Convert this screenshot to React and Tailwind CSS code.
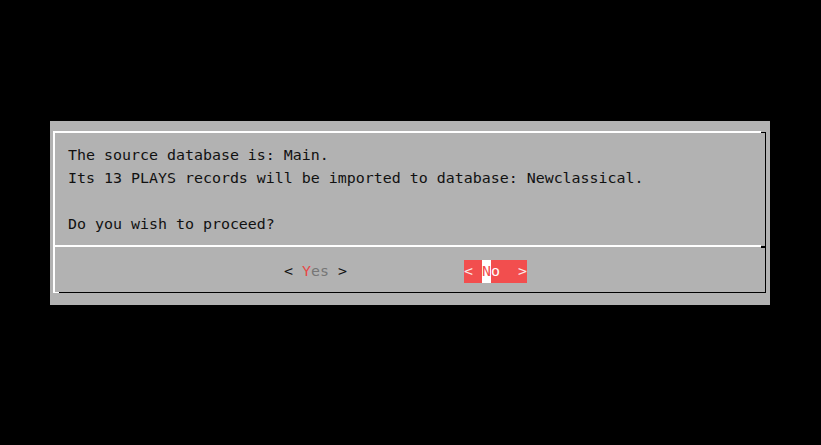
export default function App() {
  const mono = { fontFamily: '"DejaVu Sans Mono", "Liberation Mono", monospace' };

  return (
    <div className="w-[821px] h-[445px] bg-black overflow-hidden pt-[121px] pl-[50px]">
      <div className="w-[720px] h-[184px] bg-[#b2b2b2] pt-[10px] pl-[3px]" style={mono}>
        <div className="relative w-[713px] h-[162px] border-l-2 border-t-2 border-r border-b border-l-white border-t-white border-r-black border-b-black">
          {/* corner pieces drawn by the terminal in other colours */}
          <div className="absolute top-[-2px] right-[-1px] w-[5px] h-[2px] bg-[#b2b2b2] border-b border-black" />
          <div className="absolute bottom-[-1px] left-[-2px] w-[6px] h-[1px] bg-white" />

          <div className="pt-[11px] pl-[13px] text-[14.95px] leading-[23px] text-[#111] whitespace-pre">
            <div>The source database is: Main.</div>
            <div>Its 13 PLAYS records will be imported to database: Newclassical.</div>
            <div> </div>
            <div>Do you wish to proceed?</div>
          </div>

          <div className="flex items-start mt-[9px] -ml-[2px]">
            <div className="w-[708px] h-[2px] bg-white" />
            <div className="w-[4px] h-[2px] bg-black mt-[1px] h-[1px]" />
          </div>

          <div className="flex mt-[12px] pl-[229px] text-[14.95px] leading-[23px] whitespace-pre">
            <div className="flex w-[63px]">
              <span className="text-[#111]">{"< "}</span>
              <span className="text-[#e84848]">Y</span>
              <span className="text-[#767676]">es</span>
              <span className="text-[#111]">{" >"}</span>
            </div>
            <div className="flex w-[63px] ml-[117px] bg-[#f24e4e] text-[#fbeaea]">
              <span>{"< "}</span>
              <span className="bg-white text-[#f24e4e]">N</span>
              <span className="text-white">o</span>
              <span>{"  >"}</span>
            </div>
          </div>
        </div>
      </div>
    </div>
  );
}
